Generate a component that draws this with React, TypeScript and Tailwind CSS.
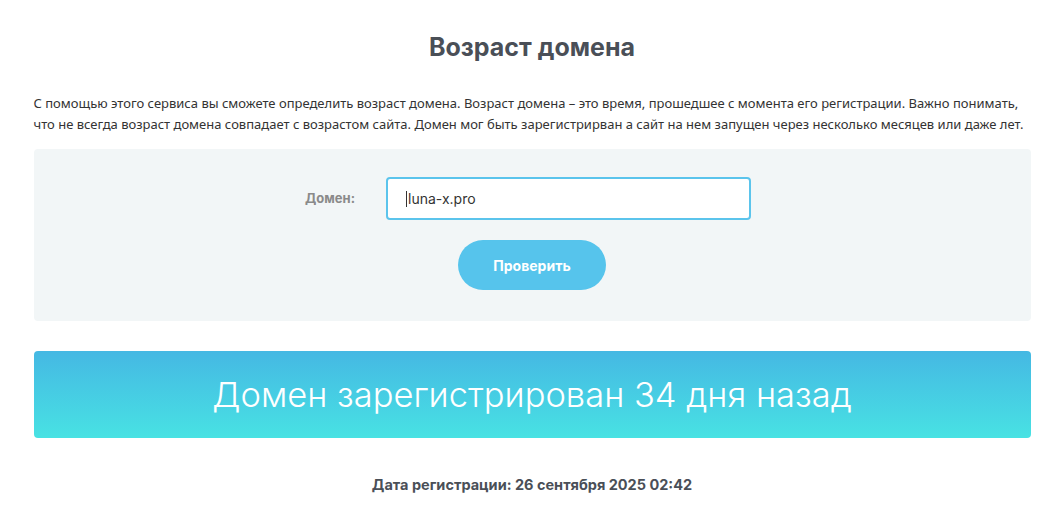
export default function App() {
  return (
    <div className="min-h-[518px] bg-white" style={{ fontFamily: '"Noto Sans", "Open Sans", sans-serif' }}>
      <div className="mx-auto w-[997px]">
        <h1 className="pt-[31px] text-center text-[25px] font-bold leading-[32px] text-[#4a4f57]" style={{ fontFamily: 'Inter, "Noto Sans", sans-serif' }}>
          Возраст домена
        </h1>
        <p className="mt-[30px] text-[13px] leading-[21px] text-[#333]">
          С помощью этого сервиса вы сможете определить возраст домена. Возраст домена – это время, прошедшее с момента его регистрации. Важно понимать, что не всегда возраст домена совпадает с возрастом сайта. Домен мог быть зарегистрирван а сайт на нем запущен через несколько месяцев или даже лет.
        </p>
        <div className="mt-[14px] flex h-[172px] flex-col items-center rounded-[4px] bg-[#f2f6f7] pt-[28px]">
          <div className="flex items-center gap-[31px] pr-[8px]" style={{ fontFamily: 'Inter, "Noto Sans", sans-serif' }}>
            <span className="text-[13px] font-bold text-[#8a8a8a]">Домен:</span>
            <div className="flex h-[43px] w-[365px] items-center rounded-[4px] border-2 border-[#5bc4ec] bg-white pl-[18px] text-[14px] text-[#333]">
              <span className="mr-[1px] inline-block h-[16px] w-[1px] bg-[#333]" />
              luna-x.pro
            </div>
          </div>
          <button className="mt-[20px] h-[50px] w-[148px] rounded-full bg-[#56c4ec] text-[14px] font-bold text-white" style={{ fontFamily: 'Inter, "Noto Sans", sans-serif' }}>
            Проверить
          </button>
        </div>
        <div className="mt-[30px] flex h-[87px] items-center justify-center rounded-[4px] bg-gradient-to-b from-[#45b8e3] to-[#48e2e3]">
          <span className="text-[34.5px] font-light text-white" style={{ fontFamily: 'Inter, "Noto Sans", sans-serif' }}>
            Домен зарегистрирован 34 дня назад
          </span>
        </div>
        <p className="mt-[36px] text-center text-[14.5px] font-bold text-[#4a4f57]" style={{ fontFamily: 'Inter, "Noto Sans", sans-serif' }}>
          Дата регистрации: 26 сентября 2025 02:42
        </p>
      </div>
    </div>
  );
}
